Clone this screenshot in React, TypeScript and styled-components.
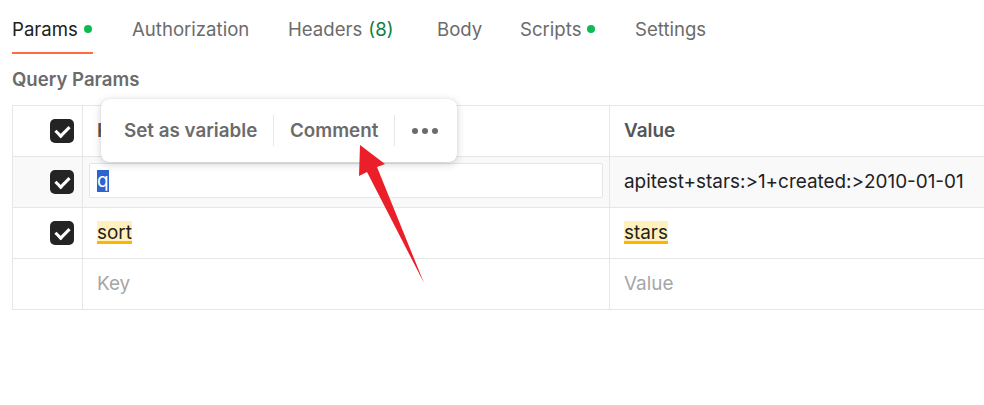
import React from 'react';
import styled, { createGlobalStyle } from 'styled-components';

// ----------------------------------------------------------------------

const GlobalStyle = createGlobalStyle`
  html, body {
    margin: 0;
    padding: 0;
    background: #ffffff;
  }
  body {
    font-family: Inter, "Noto Sans", "Liberation Sans", sans-serif;
    -webkit-font-smoothing: antialiased;
  }
`;

// ----------------------------------------------------------------------

interface ITab {
  label: string;
  width: number;
  active?: boolean;
  dot?: boolean;
  count?: number;
}

const tabs: ITab[] = [
  { label: 'Params', width: 120, active: true, dot: true },
  { label: 'Authorization', width: 156 },
  { label: 'Headers', width: 149, count: 8 },
  { label: 'Body', width: 83 },
  { label: 'Scripts', width: 115, dot: true },
  { label: 'Settings', width: 120 },
];

interface IRow {
  key: string;
  value: string;
  checked: boolean;
  hover?: boolean;
  editing?: boolean;
  highlight?: boolean;
}

const rows: IRow[] = [
  { key: 'q', value: 'apitest+stars:>1+created:>2010-01-01', checked: true, hover: true, editing: true },
  { key: 'sort', value: 'stars', checked: true, highlight: true },
  { key: '', value: '', checked: false },
];

// ----------------------------------------------------------------------

const App: React.FC = () => {
  return (
    <>
      <GlobalStyle />
      <Page>
        <TabBar>
          {tabs.map((t) => (
            <Tab key={t.label} $width={t.width}>
              <TabLabel $active={t.active}>
                {t.label}
                {t.count !== undefined && <Count>({t.count})</Count>}
                {t.dot && <Dot />}
              </TabLabel>
            </Tab>
          ))}
        </TabBar>

        <SectionTitle>Query Params</SectionTitle>

        <TableWrap>
          <Table>
            <HeadRow>
              <CheckCell>
                <Checkbox $checked />
              </CheckCell>
              <HeadCell>Key</HeadCell>
              <HeadCell>Value</HeadCell>
            </HeadRow>

            {rows.map((r, i) => (
              <Row key={i} $hover={r.hover}>
                <CheckCell>{r.checked && <Checkbox $checked />}</CheckCell>
                <Cell>
                  {r.editing ? (
                    <KeyInput>
                      <Selected>{r.key}</Selected>
                    </KeyInput>
                  ) : r.key ? (
                    r.highlight ? <Highlight>{r.key}</Highlight> : r.key
                  ) : (
                    <Placeholder>Key</Placeholder>
                  )}
                </Cell>
                <Cell>
                  {r.value ? (
                    r.highlight ? <Highlight>{r.value}</Highlight> : r.value
                  ) : (
                    <Placeholder>Value</Placeholder>
                  )}
                </Cell>
              </Row>
            ))}
          </Table>

          <Popover>
            <PopItem>Set as variable</PopItem>
            <PopDivider />
            <PopItem>Comment</PopItem>
            <PopDivider />
            <PopItem>
              <Dots>
                <i />
                <i />
                <i />
              </Dots>
            </PopItem>
          </Popover>
        </TableWrap>

        <Arrow width="984" height="405" viewBox="0 0 984 405">
          <polygon
            points="360,145 385,164 377,167 424,283 367,172 359,176"
            fill="#ea1f29"
          />
        </Arrow>
      </Page>
    </>
  );
};

// ----------------------------------------------------------------------

const Page = styled.div`
  position: relative;
  width: 984px;
  height: 405px;
  padding: 0 0 0 12px;
  box-sizing: border-box;
  overflow: hidden;
`;

const TabBar = styled.div`
  display: flex;
  height: 54px;
`;

const Tab = styled.div<{ $width: number }>`
  flex: 0 0 ${(p) => p.$width}px;
  display: flex;
  align-items: stretch;
`;

const TabLabel = styled.div<{ $active?: boolean }>`
  display: flex;
  align-items: center;
  box-sizing: border-box;
  padding-top: 6px;
  padding-right: ${(p) => (p.$active ? '1px' : '0')};
  font-size: 18.6px;
  color: ${(p) => (p.$active ? '#212121' : '#6b6b6b')};
  border-bottom: 2px solid ${(p) => (p.$active ? '#ff6c37' : 'transparent')};
`;

const Count = styled.span`
  margin-left: 6px;
  color: #0a7f3f;
`;

const Dot = styled.span`
  width: 8px;
  height: 8px;
  margin-left: 6px;
  border-radius: 50%;
  background: #0cbb52;
`;

const SectionTitle = styled.div`
  height: 51px;
  line-height: 51px;
  font-size: 18.6px;
  font-weight: 600;
  color: #6b6b6b;
`;

const TableWrap = styled.div`
  position: relative;
`;

const Table = styled.div`
  width: 990px;
  border-top: 1px solid #e6e6e6;
  border-left: 1px solid #e6e6e6;
`;

const RowBase = styled.div`
  display: grid;
  grid-template-columns: 69px 527px 1fr;
  height: 51px;
  box-sizing: border-box;
  border-bottom: 1px solid #e6e6e6;
  & > * + * {
    border-left: 1px solid #e6e6e6;
  }
`;

const HeadRow = styled(RowBase)`
  background: #ffffff;
`;

const Row = styled(RowBase)<{ $hover?: boolean }>`
  background: ${(p) => (p.$hover ? '#f9f9f9' : '#ffffff')};
`;

const CheckCell = styled.div`
  display: flex;
  align-items: center;
  justify-content: flex-end;
  padding-right: 8px;
`;

const Cell = styled.div`
  position: relative;
  display: flex;
  align-items: center;
  padding: 0 0 2px 14px;
  font-size: 18.9px;
  color: #212121;
  white-space: nowrap;
`;

const HeadCell = styled(Cell)`
  font-weight: 600;
  color: #555555;
`;

const Checkbox = styled.span<{ $checked?: boolean }>`
  position: relative;
  width: 24px;
  height: 24px;
  box-sizing: border-box;
  border-radius: 5px;
  background: ${(p) => (p.$checked ? '#242424' : '#ffffff')};
  &::after {
    content: '';
    position: absolute;
    left: 8px;
    top: 3.5px;
    width: 6px;
    height: 11px;
    border: solid #ffffff;
    border-width: 0 3px 3px 0;
    transform: rotate(45deg);
  }
`;

const KeyInput = styled.div`
  position: absolute;
  left: 6px;
  right: 6px;
  top: 6px;
  bottom: 9px;
  display: flex;
  align-items: center;
  padding-left: 7px;
  background: #ffffff;
  border: 1px solid #e6e6e6;
  border-radius: 2px;
`;

const Selected = styled.span`
  background: #2d62d2;
  color: #ffffff;
  line-height: 22px;
`;

const Highlight = styled.span`
  background: #fff1bd;
  box-shadow: inset 0 -3px 0 #ffb400;
  line-height: 23px;
`;

const Placeholder = styled.span`
  color: #a6a6a6;
`;

const Popover = styled.div`
  position: absolute;
  left: 89px;
  top: -6px;
  width: 356px;
  height: 63px;
  box-sizing: border-box;
  display: flex;
  align-items: center;
  padding: 0 3px 0 7px;
  background: #ffffff;
  border-radius: 8px;
  box-shadow: 0 2px 8px rgba(0, 0, 0, 0.18), 0 0 1px rgba(0, 0, 0, 0.2);
`;

const PopItem = styled.div`
  padding: 0 16px 0 16px;
  font-size: 18.8px;
  font-weight: 600;
  color: #6b6b6b;
  white-space: nowrap;
`;

const PopDivider = styled.div`
  width: 1px;
  height: 31px;
  background: #e6e6e6;
`;

const Dots = styled.span`
  display: flex;
  gap: 4px;
  padding-left: 1px;
  i {
    width: 6px;
    height: 6px;
    border-radius: 50%;
    background: #6b6b6b;
  }
`;

const Arrow = styled.svg`
  position: absolute;
  left: 0;
  top: 0;
  pointer-events: none;
`;

// ----------------------------------------------------------------------

export default App;
